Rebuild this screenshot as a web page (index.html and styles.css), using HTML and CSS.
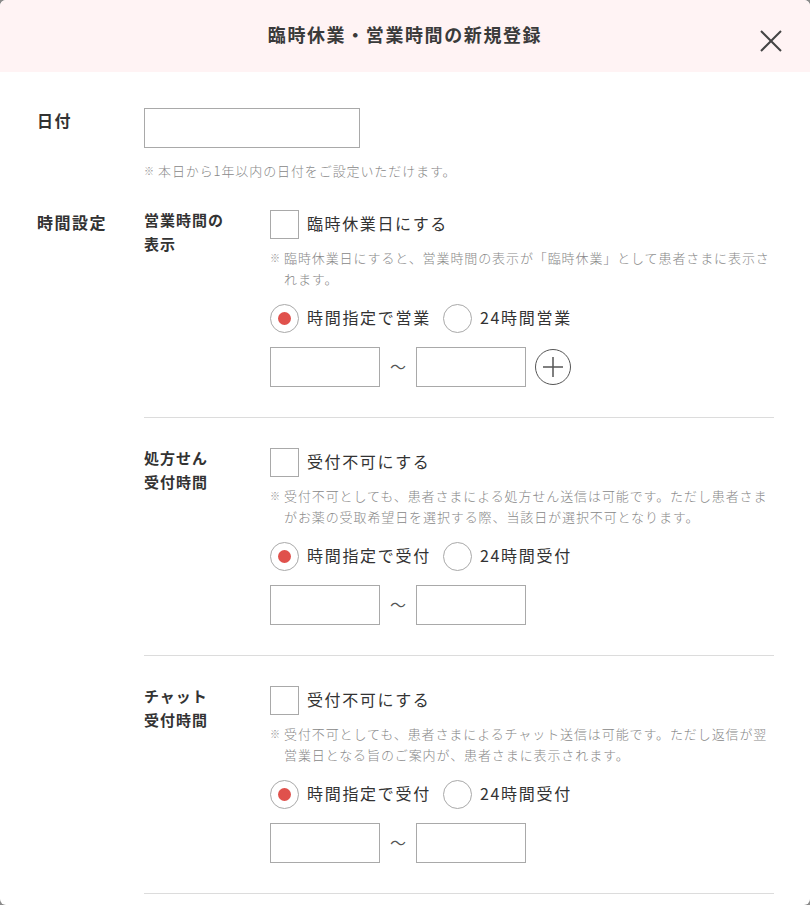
FILE: index.html
```html
<!DOCTYPE html>
<html lang="ja">
<head>
    <meta charset="UTF-8">
    <meta name="viewport" content="width=device-width, initial-scale=1.0">
    <title>臨時休業・営業時間の新規登録</title>
    <link rel="stylesheet" href="styles.css">
</head>
<body>
    <div class="modal">
        <header class="modal-header">
            <h2>臨時休業・営業時間の新規登録</h2>
            <button class="close-btn" aria-label="閉じる">
                <svg width="22" height="22" viewBox="0 0 22 22">
                    <path d="M1 1 L21 21 M21 1 L1 21" stroke="#444" stroke-width="2" fill="none"/>
                </svg>
            </button>
        </header>

        <div class="modal-body">
            <!-- 日付 -->
            <div class="form-row">
                <div class="row-label">日付</div>
                <div class="row-field">
                    <input type="text" class="date-input">
                    <p class="note note-date">本日から1年以内の日付をご設定いただけます。</p>
                </div>
            </div>

            <!-- 時間設定 -->
            <div class="form-row">
                <div class="row-label">時間設定</div>
                <div class="row-field">

                    <div class="sub-section">
                        <div class="sub-label">営業時間の<br>表示</div>
                        <div class="sub-field">
                            <label class="check">
                                <span class="check-box"></span><span class="text">臨時休業日にする</span>
                            </label>
                            <p class="note">臨時休業日にすると、営業時間の表示が「臨時休業」として患者さまに表示されます。</p>
                            <div class="radio-row">
                                <label class="radio"><span class="radio-circle checked"></span><span class="text">時間指定で営業</span></label>
                                <label class="radio"><span class="radio-circle"></span><span class="text">24時間営業</span></label>
                            </div>
                            <div class="time-row">
                                <input type="text" class="time-input">
                                <span class="tilde">〜</span>
                                <input type="text" class="time-input">
                                <button class="add-btn" aria-label="追加">
                                    <svg width="36" height="36" viewBox="0 0 36 36">
                                        <circle cx="18" cy="18" r="17.5" stroke="#555" stroke-width="1" fill="none"/>
                                        <path d="M8 18 H28 M18 8 V28" stroke="#555" stroke-width="1.5" fill="none"/>
                                    </svg>
                                </button>
                            </div>
                        </div>
                    </div>

                    <div class="sub-section">
                        <div class="sub-label">処方せん<br>受付時間</div>
                        <div class="sub-field">
                            <label class="check">
                                <span class="check-box"></span><span class="text">受付不可にする</span>
                            </label>
                            <p class="note">受付不可としても、患者さまによる処方せん送信は可能です。ただし患者さまがお薬の受取希望日を選択する際、当該日が選択不可となります。</p>
                            <div class="radio-row">
                                <label class="radio"><span class="radio-circle checked"></span><span class="text">時間指定で受付</span></label>
                                <label class="radio"><span class="radio-circle"></span><span class="text">24時間受付</span></label>
                            </div>
                            <div class="time-row">
                                <input type="text" class="time-input">
                                <span class="tilde">〜</span>
                                <input type="text" class="time-input">
                            </div>
                        </div>
                    </div>

                    <div class="sub-section">
                        <div class="sub-label">チャット<br>受付時間</div>
                        <div class="sub-field">
                            <label class="check">
                                <span class="check-box"></span><span class="text">受付不可にする</span>
                            </label>
                            <p class="note">受付不可としても、患者さまによるチャット送信は可能です。ただし返信が翌営業日となる旨のご案内が、患者さまに表示されます。</p>
                            <div class="radio-row">
                                <label class="radio"><span class="radio-circle checked"></span><span class="text">時間指定で受付</span></label>
                                <label class="radio"><span class="radio-circle"></span><span class="text">24時間受付</span></label>
                            </div>
                            <div class="time-row">
                                <input type="text" class="time-input">
                                <span class="tilde">〜</span>
                                <input type="text" class="time-input">
                            </div>
                        </div>
                    </div>

                </div>
            </div>
        </div>
    </div>
</body>
</html>
```

FILE: styles.css
```css
* {
    margin: 0;
    padding: 0;
    box-sizing: border-box;
}

body {
    font-family: "Noto Sans CJK JP", "Noto Sans", sans-serif;
    background: #8a8a8a;
    color: #333;
    width: 810px;
    height: 905px;
    overflow: hidden;
}

.modal {
    width: 810px;
    height: 905px;
    background: #fff;
    border-radius: 6px;
    overflow: hidden;
}

.modal-header {
    position: relative;
    height: 72px;
    padding-bottom: 4px;
    background: #fff3f4;
    display: flex;
    justify-content: center;
    align-items: center;
}

.modal-header h2 {
    font-size: 18px;
    font-weight: 700;
    letter-spacing: 1.6px;
    color: #3a3a3a;
}

.close-btn {
    position: absolute;
    top: 30px;
    right: 28px;
    width: 22px;
    height: 22px;
    border: none;
    background: none;
    cursor: pointer;
    display: flex;
}

.modal-body {
    padding: 36px 36px 0 37px;
}

.form-row {
    display: grid;
    grid-template-columns: 107px 1fr;
    margin-bottom: 29px;
}

.row-label {
    font-size: 16px;
    font-weight: 700;
    line-height: 24px;
    letter-spacing: 1.5px;
}

input {
    font-family: inherit;
    border: 1px solid #a9a9a9;
    background: #fff;
    outline: none;
}

.date-input {
    display: block;
    width: 216px;
    height: 40px;
}

.note {
    position: relative;
    font-size: 13px;
    font-weight: 300;
    line-height: 21px;
    letter-spacing: 0.9px;
    color: #888;
    padding-left: 14px;
    margin-top: 8px;
}

.note::before {
    content: "※";
    position: absolute;
    left: 0;
    top: 0;
    font-size: 10px;
    color: #999;
}

.note-date {
    margin-top: 13px;
    line-height: 20px;
}

.sub-section {
    display: grid;
    grid-template-columns: 126px 1fr;
    padding: 30px 0;
    border-bottom: 1px solid #dcdcdc;
}

.sub-section:first-child {
    padding-top: 0;
}

.sub-label {
    font-size: 15px;
    font-weight: 700;
    line-height: 24px;
    letter-spacing: 1px;
    margin-top: -2px;
}

.check {
    display: flex;
    align-items: center;
    gap: 8px;
    height: 29px;
    font-size: 16px;
    letter-spacing: 1.6px;
}

.text {
    padding-bottom: 4px;
}

.check-box {
    width: 29px;
    height: 29px;
    border: 1px solid #a9a9a9;
    background: #fff;
}

.radio-row {
    display: flex;
    align-items: center;
    gap: 12px;
    height: 29px;
    margin-top: 15px;
}

.radio {
    display: flex;
    align-items: center;
    gap: 8px;
    font-size: 16px;
    letter-spacing: 1.7px;
}

.radio-circle {
    width: 29px;
    height: 29px;
    border: 1px solid #a9a9a9;
    border-radius: 50%;
    display: flex;
    justify-content: center;
    align-items: center;
}

.radio-circle.checked::after {
    content: "";
    width: 13px;
    height: 13px;
    border-radius: 50%;
    background: #e0514c;
}

.time-row {
    display: flex;
    align-items: center;
    margin-top: 14px;
}

.time-input {
    width: 110px;
    height: 40px;
}

.tilde {
    width: 36px;
    text-align: center;
    font-size: 16px;
    color: #555;
    padding-bottom: 2px;
}

.add-btn {
    margin-left: 9px;
    width: 36px;
    height: 36px;
    border: none;
    background: none;
    display: flex;
    cursor: pointer;
}
```
